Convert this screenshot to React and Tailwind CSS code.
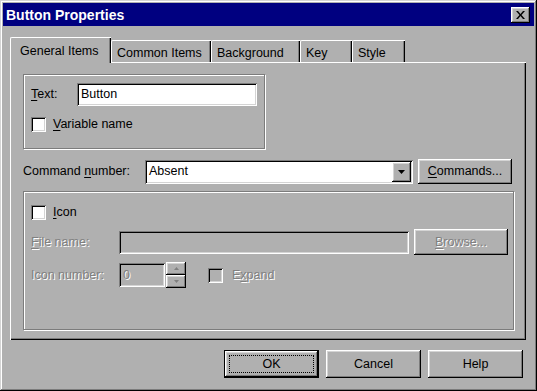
import React from "react";

const raised =
  "shadow-[inset_-1px_-1px_#000,inset_1px_1px_#fff,inset_-2px_-2px_#7c7c7c,inset_2px_2px_#d4d4d4]";
const sunken =
  "shadow-[inset_1px_1px_#7c7c7c,inset_-1px_-1px_#fff,inset_2px_2px_#000,inset_-2px_-2px_#d4d4d4]";
const etched =
  "border border-[#7c7c7c] shadow-[1px_1px_0_#fff,inset_1px_1px_0_#fff]";
const disabledText = "text-[#808080] [text-shadow:1px_1px_0_#fff]";

function U({ children }) {
  return <span className="underline underline-offset-2">{children}</span>;
}

function Checkbox({ className = "" }) {
  return (
    <div className={`w-[15px] h-[15px] bg-white shrink-0 ${sunken} ${className}`} />
  );
}

function Button({ children, className = "", disabled = false }) {
  return (
    <div
      className={`flex items-center justify-center bg-[#b0b0b0] ${raised} ${
        disabled ? disabledText : "text-black"
      } ${className}`}
    >
      {children}
    </div>
  );
}

function Tab({ children, w, selected }) {
  if (selected) {
    return (
      <div
        className={`relative z-10 -mb-px h-[26px] ${w} bg-[#b0b0b0] border-l border-t border-white shadow-[inset_-1px_0_#000,inset_-2px_0_#7c7c7c] rounded-tl-[2px] flex items-start pt-[7px] pl-[9px]`}
      >
        {children}
      </div>
    );
  }
  return (
    <div
      className={`h-[22px] ${w} border-l border-t border-white shadow-[inset_-1px_0_#000,inset_-2px_0_#7c7c7c] rounded-tl-[2px] flex items-start pt-[6px] pl-[5px]`}
    >
      {children}
    </div>
  );
}

export default function App() {
  return (
    <div
      className="w-[537px] h-[391px] bg-[#b0b0b0] p-[3px] flex flex-col text-[12.5px] leading-none text-black shadow-[inset_-1px_-1px_#000,inset_1px_1px_#d4d4d4,inset_-2px_-2px_#7c7c7c,inset_2px_2px_#fff]"
      style={{ fontFamily: '"Liberation Sans", Arial, sans-serif' }}
    >
      {/* Title bar */}
      <div className="h-[23px] bg-[#000080] flex items-center justify-between pl-[3px] pr-[4px]">
        <span className="text-white font-bold text-[14px]">Button Properties</span>
        <div className={`w-[19px] h-[16px] bg-[#b0b0b0] ${raised} flex items-center justify-center`}>
          <svg width="9" height="8" viewBox="0 0 9 8">
            <path d="M0 0h2l2.5 3 2.5-3h2L5.5 4 9 8H7L4.5 5 2 8H0l3.5-4z" fill="#000" />
          </svg>
        </div>
      </div>

      {/* Tabs */}
      <div className="mt-[11px] ml-[7px] h-[25px] flex items-end">
        <Tab w="w-[101px]" selected>General Items</Tab>
        <Tab w="w-[100px]">Common Items</Tab>
        <Tab w="w-[89px]">Background</Tab>
        <Tab w="w-[52px]">Key</Tab>
        <Tab w="w-[53px]">Style</Tab>
      </div>

      {/* Panel */}
      <div
        className={`ml-[7px] w-[516px] h-[278px] flex flex-col pl-[12px] pt-[11px] border-l border-t border-white shadow-[inset_-1px_-1px_#000,inset_-2px_-2px_#7c7c7c]`}
      >
        {/* Group 1 */}
        <div className={`w-[242px] h-[75px] ${etched} flex flex-col pl-[7px] pt-[8px]`}>
          <div className="flex items-center h-[23px]">
            <span className="w-[46px]">
              <U>T</U>ext:
            </span>
            <div className={`w-[180px] h-[23px] bg-white ${sunken} flex items-center pl-[4px]`}>
              Button
            </div>
          </div>
          <div className="flex items-center mt-[11px]">
            <Checkbox />
            <span className="ml-[7px]">
              <U>V</U>ariable name
            </span>
          </div>
        </div>

        {/* Command row */}
        <div className="flex items-center mt-[10px] h-[25px]">
          <span className="w-[122px]">
            Command <U>n</U>umber:
          </span>
          <div className={`w-[268px] h-[24px] bg-white ${sunken} flex items-center pl-[4px] pr-[2px]`}>
            <span className="flex-1">Absent</span>
            <div className={`w-[19px] h-[20px] bg-[#b0b0b0] ${raised} flex items-center justify-center`}>
              <svg width="7" height="4" viewBox="0 0 7 4">
                <path d="M0 0h7L3.5 4z" fill="#000" />
              </svg>
            </div>
          </div>
          <Button className="ml-[5px] w-[94px] h-[25px]">
            <span>
              <U>C</U>ommands...
            </span>
          </Button>
        </div>

        {/* Group 2 */}
        <div className={`mt-[7px] w-[491px] h-[139px] ${etched} flex flex-col pl-[7px] pt-[13px]`}>
          <div className="flex items-center">
            <Checkbox />
            <span className="ml-[7px]">
              <U>I</U>con
            </span>
          </div>
          <div className="flex items-center mt-[9px] h-[26px]">
            <span className={`w-[88px] ${disabledText}`}>
              <U>F</U>ile name:
            </span>
            <div className={`w-[290px] h-[23px] bg-[#b0b0b0] ${sunken}`} />
            <Button disabled className="ml-[5px] w-[94px] h-[26px]">
              <span>
                <U>B</U>rowse...
              </span>
            </Button>
          </div>
          <div className="flex items-center mt-[7px] h-[26px]">
            <span className={`w-[88px] ${disabledText}`}>Icon number:</span>
            <div className={`w-[46px] h-[24px] bg-[#b0b0b0] ${sunken} flex items-center pl-[4px] ${disabledText}`}>
              0
            </div>
            <div className="flex flex-col w-[20px] h-[26px] ml-px">
              <div className={`h-[13px] ${raised} bg-[#b0b0b0] flex items-center justify-center`}>
                <svg width="5" height="3" viewBox="0 0 5 3">
                  <path d="M2.5 0L5 3H0z" fill="#808080" />
                </svg>
              </div>
              <div className={`h-[13px] ${raised} bg-[#b0b0b0] flex items-center justify-center`}>
                <svg width="5" height="3" viewBox="0 0 5 3">
                  <path d="M0 0h5L2.5 3z" fill="#808080" />
                </svg>
              </div>
            </div>
            <Checkbox className="ml-[22px] !bg-[#b0b0b0]" />
            <span className={`ml-[9px] ${disabledText}`}>
              E<U>x</U>pand
            </span>
          </div>
        </div>
      </div>

      {/* Bottom buttons */}
      <div className="flex justify-end gap-[7px] mt-[10px] pr-[11px]">
        <div className="w-[95px] h-[28px] border border-black">
          <Button className="w-full h-full p-[4px]">
            <div className="w-full h-full border border-dotted border-black flex items-center justify-center">
              OK
            </div>
          </Button>
        </div>
        <Button className="w-[95px] h-[28px]">Cancel</Button>
        <Button className="w-[95px] h-[28px]">Help</Button>
      </div>
    </div>
  );
}
